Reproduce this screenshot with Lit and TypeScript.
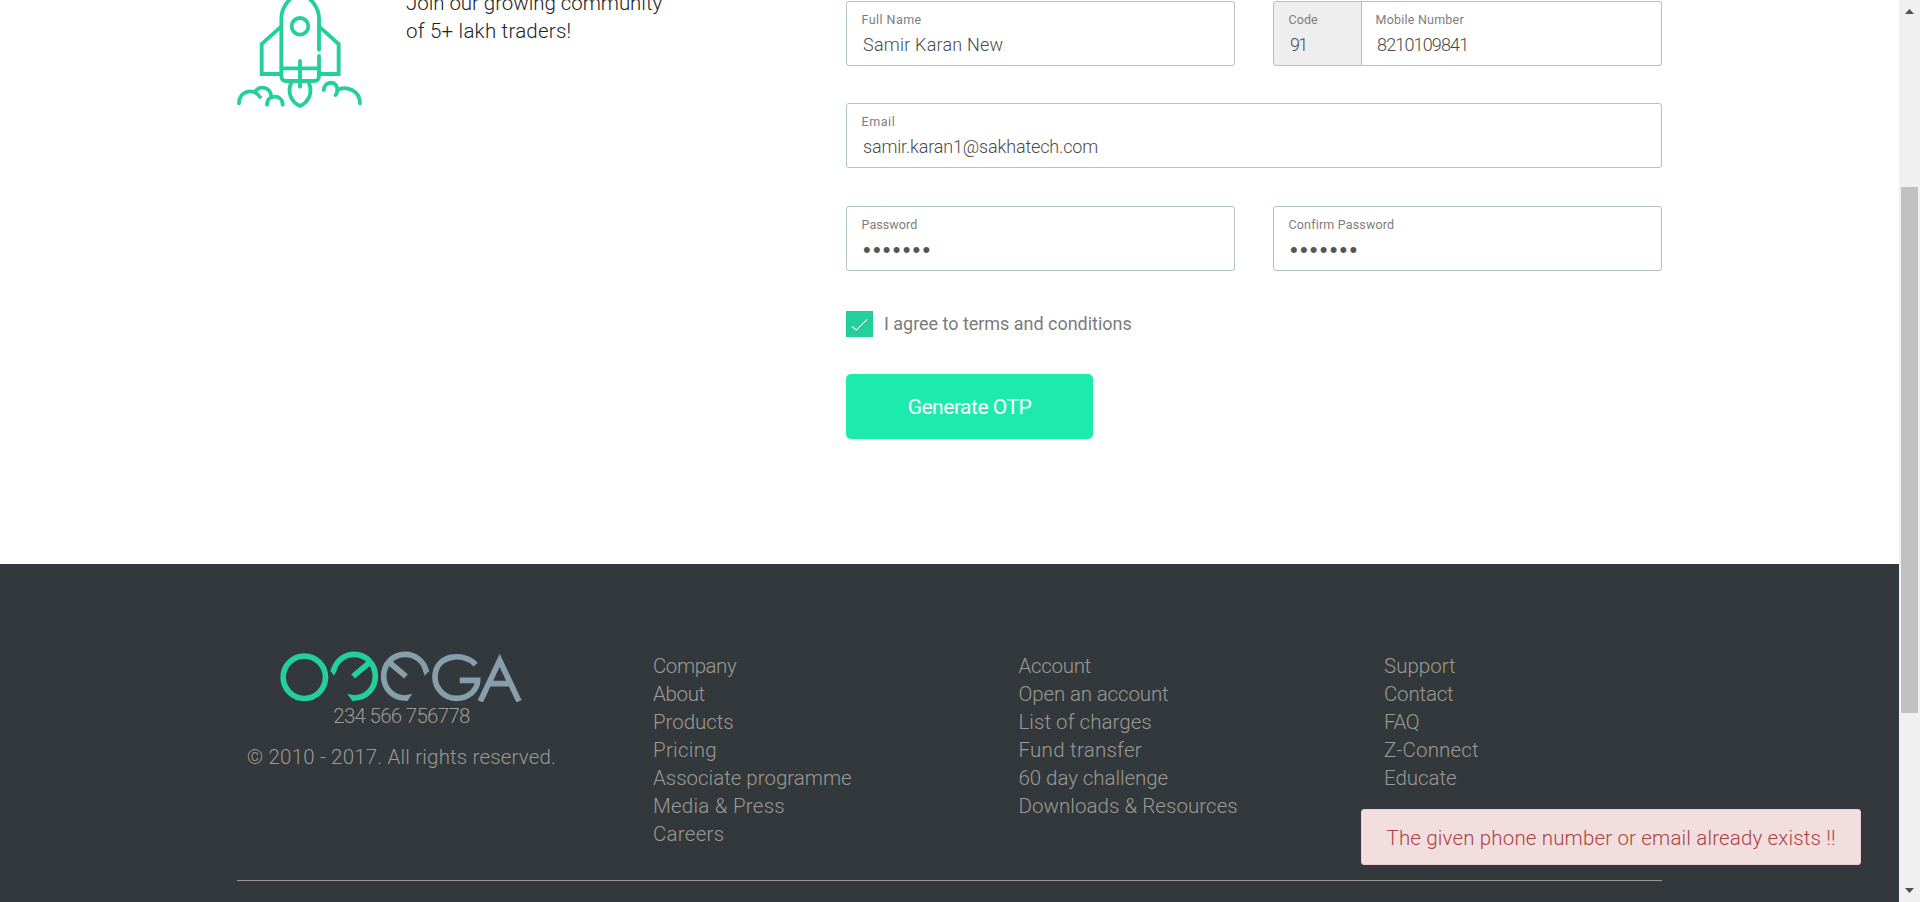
import { LitElement, html, svg, css } from "lit";
import { customElement, property, query } from "lit/decorators.js";

/** A run of text whose tracking is adjusted so that it spans a given width. */
@customElement("tracked-text")
class TrackedText extends LitElement {
  static styles = css`
    :host { display: block; white-space: pre; }
    .run { display: inline-block; }
  `;
  @property() text = "";
  @property({ type: Number }) span = 0;
  @query(".run") run!: HTMLElement;

  updated() {
    this.run.style.letterSpacing = "0px";
    const natural = this.run.getBoundingClientRect().width;
    const gaps = Math.max(1, this.text.length - 1);
    this.run.style.letterSpacing = (this.span + 1.2 - natural) / gaps + "px";
  }
  render() {
    return html`<span class="run">${this.text}</span>`;
  }
}

@customElement("form-field")
class FormField extends LitElement {
  static styles = css`
    :host { display: block; box-sizing: border-box; height: 65px; border: 1px solid #b0c4bb; border-radius: 3px; padding: 8px 0 0 14.5px; }
    .label { font-size: 12.5px; line-height: 20px; color: #7d7d7d; }
    .value { font-size: 18px; line-height: 24px; font-weight: 300; color: #4a4a4a; padding: 3px 0 0 1.5px; }
    .secret { font-family: "Liberation Sans", sans-serif; font-size: 22px; font-weight: 400; padding: 3px 0 0 1.5px; color: #555; }
  `;
  @property() label = "";
  @property({ type: Number }) labelSpan = 0;
  @property() value = "";
  @property({ type: Number }) valueSpan = 0;
  @property({ type: Boolean }) secret = false;
  render() {
    return html`
      <tracked-text class="label" .text=${this.label} .span=${this.labelSpan}></tracked-text>
      <tracked-text class="value ${this.secret ? "secret" : ""}" .text=${this.value} .span=${this.valueSpan}></tracked-text>
    `;
  }
}

type Item = [string, number];
const columns: Item[][] = [
  [["Company", 82.5], ["About", 51], ["Products", 79.5], ["Pricing", 62.5], ["Associate programme", 197.5], ["Media & Press", 130.5], ["Careers", 70]],
  [["Account", 71.5], ["Open an account", 149], ["List of charges", 132], ["Fund transfer", 122], ["60 day challenge", 148.5], ["Downloads & Resources", 218]],
  [["Support", 70.5], ["Contact", 68.5], ["FAQ", 34.5], ["Z-Connect", 93.5], ["Educate", 71.5]],
];

const rocket = svg`
  <g fill="none" stroke="#23cf9a" stroke-width="11.5" stroke-linecap="round" stroke-linejoin="miter">
    <path d="M297 149 V55 C297 25 275 -8 240 -20 C205 -8 184 25 184 55 V228 Q184 243 199 243 H282 Q297 243 297 228 V168"/>
    <circle cx="240" cy="79" r="25"/>
    <path d="M184 79 L125 132 V222 H184 M297 79 L356 132 V222 H297"/>
    <path d="M184 205 H297 M240 183 V260"/>
    <path d="M214 247 C201 275 212 306 240 318 C268 306 279 275 266 247"/>
    <path d="M57 310 C57 272 100 262 120 291 M106 275 C116 256 151 259 154 289 M141 314 C141 282 188 282 188 314"/>
    <path d="M311 270 C313 242 352 240 352 270 Q352 279 347 285 M352 270 C378 256 420 270 420 310"/>
  </g>`;

const logo = svg`
  <g fill="none" stroke-width="17">
    <g stroke="#23cf9a">
      <circle cx="222" cy="141" r="63.5"/>
      <path d="M309 126 C314 94 341 72 371 72 C407 72 435 101 435 138 C435 175 407 203 371 203"/>
      <path d="M416 98 L368 138"/>
    </g>
    <g stroke="#879fac">
      <path d="M588 126 C583 94 556 72 524 72 C488 72 460 101 460 138 C460 175 488 203 524 203"/>
      <path d="M479 98 L527 138"/>
      <path d="M736 103 C702 64 614 71 614 141 C614 174 642 204 678 204 C713 204 742 180 742 150 H688"/>
      <path d="M750 213 L808 90 L866 213 M774 160 H842"/>
    </g>
  </g>
  <path fill="#23cf9a" d="M299 118 L318 120 L311 137 Z M351 190 L372 195 V212 H366 Z"/>
  <path fill="#879fac" d="M598 118 L579 120 L583 137 Z M546 190 L524 195 V212 H531 Z"/>`;

@customElement("app-root")
class AppRoot extends LitElement {
  static styles = css`
    :host { display: flex; height: 902px; overflow: hidden; background: #fff; font-family: Roboto, "Open Sans", sans-serif; }
    .page { flex: 1; display: flex; flex-direction: column; }
    .main { height: 564px; flex: none; box-sizing: border-box; padding: 1px 237px 0; display: flex; }
    .intro { width: 609px; display: flex; align-items: flex-start; }
    .rocket { display: block; width: 126px; height: 109px; margin-top: -1px; flex: none; }
    .tagline { margin: -12px 0 0 43px; font-size: 20.5px; line-height: 28px; font-weight: 300; color: #222; }
    .form { width: 816px; display: flex; flex-direction: column; align-items: flex-start; }
    .row { display: flex; gap: 38px; width: 816px; margin-bottom: 37px; }
    .half { width: 389px; flex: none; }
    .full { width: 816px; flex: none; }
    .last { margin: 1px 0 40px; }
    .phone { display: flex; }
    .code { width: 89px; flex: none; background: #eee; border-radius: 3px 0 0 3px; }
    .mobile { flex: 1; border-left: 0; border-radius: 0 3px 3px 0; padding-left: 13.5px; }
    .agree { display: flex; gap: 11px; height: 26px; font-size: 18px; line-height: 26px; color: #7b7b7b; }
    .box { width: 27px; height: 26px; background: #23cf9a; }
    .otp { margin-top: 37px; width: 247px; height: 65px; border-radius: 5px; background: #1debae; color: #fff; font-size: 21px; font-weight: 400; display: flex; align-items: center; justify-content: center; }
    .footer { flex: 1; background: #33383c; padding: 87px 237px 0; color: #9b9b93; font-size: 20.5px; line-height: 28px; font-weight: 300; }
    .columns { display: flex; height: 229px; border-bottom: 1px solid #9b9b93; }
    .brand { width: 329px; margin-right: 87px; display: flex; flex-direction: column; align-items: center; }
    .logo { display: block; width: 243px; height: 51px; }
    .copy { margin-top: 13px; }
    .links { width: 365.5px; padding-top: 1px; }
    .links:last-child { width: 200px; }
    .scroll { width: 21px; background: #f0f0f0; box-sizing: border-box; padding: 0 2px; }
    .bar { display: flex; flex-direction: column; align-items: center; height: 902px; box-sizing: border-box; padding: 9px 0; }
    .up, .down { width: 9px; height: 5px; background: #505050; }
    .up { clip-path: polygon(50% 0, 100% 100%, 0 100%); }
    .down { clip-path: polygon(0 0, 100% 0, 50% 100%); margin-top: auto; }
    .thumb { width: 17px; height: 526px; margin-top: 173px; background: #c1c1c1; }
    .toast { position: absolute; left: 1361px; top: 809px; width: 500px; height: 56px; box-sizing: border-box; border: 1px solid #ebccd1; border-radius: 3px; background: #f2dede; color: #a94442; font-size: 20.5px; line-height: 56px; font-weight: 300; padding-left: 24.5px; }
  `;

  render() {
    return html`
      <div class="page">
        <div class="main">
          <div class="intro">
            <svg class="rocket" viewBox="51 0 378 327">${rocket}</svg>
            <div class="tagline">
              <tracked-text .text=${"Join our growing community"} .span=${255}></tracked-text>
              <tracked-text .text=${"of 5+ lakh traders!"} .span=${164}></tracked-text>
            </div>
          </div>
          <div class="form">
            <div class="row">
              <form-field class="half" .label=${"Full Name"} .labelSpan=${58.5} .value=${"Samir Karan New"} .valueSpan=${139}></form-field>
              <div class="phone half">
                <form-field class="code" .label=${"Code"} .labelSpan=${28} .value=${"91"} .valueSpan=${17}></form-field>
                <form-field class="mobile" .label=${"Mobile Number"} .labelSpan=${87} .value=${"8210109841"} .valueSpan=${91}></form-field>
              </div>
            </div>
            <div class="row">
              <form-field class="full" .label=${"Email"} .labelSpan=${32} .value=${"samir.karan1@sakhatech.com"} .valueSpan=${234}></form-field>
            </div>
            <div class="row last">
              <form-field class="half" secret .label=${"Password"} .labelSpan=${54.5} .value=${"•••••••"} .valueSpan=${66}></form-field>
              <form-field class="half" secret .label=${"Confirm Password"} .labelSpan=${104} .value=${"•••••••"} .valueSpan=${66}></form-field>
            </div>
            <div class="agree">
              <svg class="box" viewBox="0 0 27 26"><path d="M6.3 16.3 L10.5 20 L21.5 9" fill="none" stroke="#1aa87c" stroke-width="1.2"/><path d="M6 15.5 L10.3 19.3 L21.3 8.3" fill="none" stroke="#fff" stroke-width="1.2"/></svg>
              <tracked-text .text=${"I agree to terms and conditions"} .span=${246.5}></tracked-text>
            </div>
            <div class="otp"><tracked-text .text=${"Generate OTP"} .span=${123}></tracked-text></div>
          </div>
        </div>
        <div class="footer">
          <div class="columns">
            <div class="brand">
              <svg class="logo" viewBox="149 62 729 153">${logo}</svg>
              <tracked-text .text=${"234 566 756778"} .span=${136}></tracked-text>
              <tracked-text class="copy" .text=${"© 2010 - 2017. All rights reserved."} .span=${308}></tracked-text>
            </div>
            ${columns.map((c) => html`<div class="links">${c.map(([t, w]) => html`<tracked-text .text=${t} .span=${w}></tracked-text>`)}</div>`)}
          </div>
        </div>
      </div>
      <div class="scroll"><div class="bar"><div class="up"></div><div class="thumb"></div><div class="down"></div></div></div>
      <div class="toast"><tracked-text .text=${"The given phone number or email already exists !!"} .span=${448}></tracked-text></div>
    `;
  }
}
